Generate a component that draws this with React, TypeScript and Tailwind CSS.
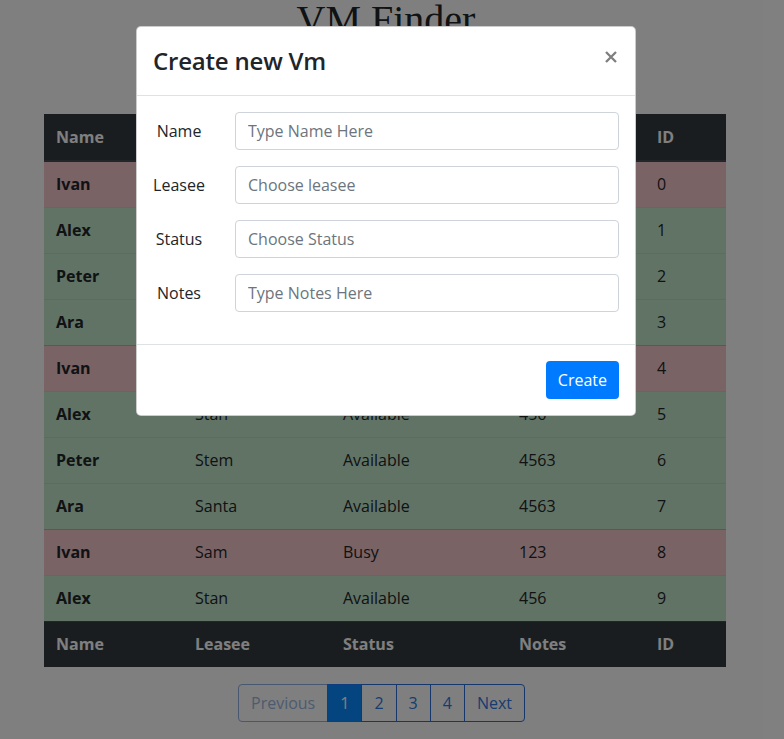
import React from "react";

type Row = { name: string; leasee: string; status: string; notes: string; id: number };

const base: Omit<Row, "id">[] = [
  { name: "Ivan", leasee: "Sam", status: "Busy", notes: "123" },
  { name: "Alex", leasee: "Stan", status: "Available", notes: "456" },
  { name: "Peter", leasee: "Stem", status: "Available", notes: "4563" },
  { name: "Ara", leasee: "Santa", status: "Available", notes: "4563" },
];

const rows: Row[] = Array.from({ length: 10 }, (_, i) => ({ ...base[i % 4], id: i }));

const font = "font-['Open_Sans','Noto_Sans',sans-serif]";

function HeadRow({ bottom }: { bottom?: boolean }) {
  const cells = ["Name", "Leasee", "Status", "Notes", "ID"];
  return (
    <tr className="bg-[#343a40] text-white">
      {cells.map((c) => (
        <th
          key={c}
          className={`px-3 text-left font-bold text-[16px] leading-6 border-[#454d55] ${
            bottom ? "h-[46px] border-t" : "h-[47px] border-b-2"
          }`}
        >
          {c}
        </th>
      ))}
    </tr>
  );
}

function Field({ label, placeholder }: { label: string; placeholder: string }) {
  return (
    <div className="flex mb-4">
      <label className="w-[52px] shrink-0 text-center pt-[7px] text-[16px] leading-6 text-[#212529]">{label}</label>
      <div className="ml-[30px] flex-1">
        <input
          className="w-full h-[38px] border border-[#ced4da] rounded px-3 text-[16px] text-[#495057] placeholder:text-[#6c757d] outline-none"
          placeholder={placeholder}
        />
      </div>
    </div>
  );
}

export default function App() {
  return (
    <div className={`relative w-full h-[739px] bg-white overflow-hidden ${font}`}>
      <div className="w-[772px]">
        <h1 className="text-center font-['Liberation_Serif',serif] text-[40px] leading-[40px] font-normal text-[#212529]">
          VM Finder
        </h1>

        <div className="mx-[44px] mt-[74px]">
          <table className="w-[682px] table-fixed border-collapse text-[16px] text-[#212529]">
            <colgroup>
              <col className="w-[139px]" />
              <col className="w-[148px]" />
              <col className="w-[176px]" />
              <col className="w-[138px]" />
              <col className="w-[81px]" />
            </colgroup>
            <thead>
              <HeadRow />
            </thead>
            <tbody>
              {rows.map((r, i) => {
                const busy = r.status === "Busy";
                const bg = busy ? "bg-[#f5c6cb]" : "bg-[#c3e6cb]";
                const bc = busy ? "border-[#ed969e]" : "border-[#b1dfbb]";
                const cell = `px-3 h-[46px] ${i > 0 ? `border-t ${bc}` : ""}`;
                return (
                  <tr key={r.id} className={bg}>
                    <td className={`${cell} font-bold`}>{r.name}</td>
                    <td className={cell}>{r.leasee}</td>
                    <td className={cell}>{r.status}</td>
                    <td className={cell}>{r.notes}</td>
                    <td className={cell}>{r.id}</td>
                  </tr>
                );
              })}
            </tbody>
            <tfoot>
              <HeadRow bottom />
            </tfoot>
          </table>
        </div>

        <div className="mt-[17px] flex justify-center pr-[9px]">
          <ul className="flex text-[16px] leading-5">
            <li className="px-3 py-2 border border-[#8fb0e0] rounded-l text-[#9ab6e0]">Previous</li>
            <li className="px-3 py-2 border border-[#1e7bff] bg-[#0a8bff] text-white -ml-px">1</li>
            <li className="px-3 py-2 border border-[#2a6fd6] text-[#2f78e0] -ml-px">2</li>
            <li className="px-3 py-2 border border-[#2a6fd6] text-[#2f78e0] -ml-px">3</li>
            <li className="px-3 py-2 border border-[#2a6fd6] text-[#2f78e0] -ml-px">4</li>
            <li className="px-3 py-2 border border-[#2a6fd6] text-[#2f78e0] -ml-px rounded-r">Next</li>
          </ul>
        </div>
      </div>

      {/* backdrop */}
      <div className="absolute inset-0 bg-black/50" />

      {/* modal */}
      <div className="absolute top-[26px] left-[136px] w-[500px] bg-white border border-black/20 rounded-[5px]">
        <div className="flex items-start justify-between p-4 border-b border-[#dee2e6]">
          <h4 className="text-[24px] leading-9 font-semibold tracking-[-0.2px] text-[#212529]">Create new Vm</h4>
          <button className="mt-[8px] mr-[2px] w-[12px] h-[12px] opacity-50">
            <svg width="12" height="12" viewBox="0 0 12 12">
              <path d="M1 1 L11 11 M11 1 L1 11" stroke="#000" strokeWidth="2.3" strokeLinecap="butt" />
            </svg>
          </button>
        </div>
        <div className="p-4">
          <Field label="Name" placeholder="Type Name Here" />
          <Field label="Leasee" placeholder="Choose leasee" />
          <Field label="Status" placeholder="Choose Status" />
          <Field label="Notes" placeholder="Type Notes Here" />
        </div>
        <div className="flex justify-end p-3 border-t border-[#dee2e6]">
          <button className="m-1 px-3 h-[38px] bg-[#007bff] text-white text-[16px] leading-6 rounded">Create</button>
        </div>
      </div>
    </div>
  );
}
